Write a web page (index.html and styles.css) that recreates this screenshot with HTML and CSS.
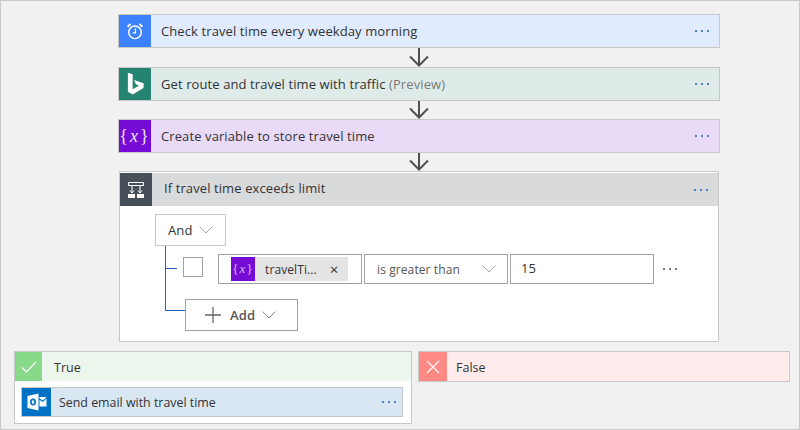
FILE: index.html
```html
<!DOCTYPE html>
<html>
<head>
    <title>Travel time logic app</title>
    <link rel="stylesheet" href="styles.css">
</head>
<body>
    <div class="flow">
        <div class="step step-timer">
            <div class="step-icon icon-timer">
                <svg width="18" height="18" viewBox="0 0 20 20" fill="none" stroke="#fff" stroke-width="1.6">
                    <circle cx="10" cy="11.500" r="7"/>
                    <path d="M10.500 7V12.200H7.500" stroke-width="1.400"/>
                    <path d="M1.800 5.200 5 2.200M18.200 5.200 15 2.200" stroke-width="2.200"/>
                </svg>
            </div>
            <div class="step-title">Check travel time every weekday morning</div>
            <div class="dots"><i></i><i></i><i></i></div>
        </div>
        <div class="arrow">
            <svg width="20" height="19" viewBox="0 0 20 19" fill="none" stroke="#505050" stroke-width="2"><path d="M10 0V17.500M1 8.500 10 17.500 19 8.500"/></svg>
        </div>
        <div class="step step-bing">
            <div class="step-icon icon-bing">
                <svg width="19" height="25" viewBox="0 0 20 26"><path fill="#fff" d="M2 0.500 7 2.300V18L13.500 14.300 10.400 12.800 8.500 8.200 18.500 11.800V16.700L7 23.500 2 20.700Z"/></svg>
            </div>
            <div class="step-title">Get route and travel time with traffic <span class="muted">(Preview)</span></div>
            <div class="dots"><i></i><i></i><i></i></div>
        </div>
        <div class="arrow arrow-short">
            <svg width="20" height="18" viewBox="0 0 20 18" fill="none" stroke="#505050" stroke-width="2"><path d="M10 0V16.500M1 7.500 10 16.500 19 7.500"/></svg>
        </div>
        <div class="step step-var">
            <div class="step-icon icon-var"><span class="var-text">{<i>x</i>}</span></div>
            <div class="step-title">Create variable to store travel time</div>
            <div class="dots"><i></i><i></i><i></i></div>
        </div>
        <div class="arrow arrow-short">
            <svg width="20" height="18" viewBox="0 0 20 18" fill="none" stroke="#505050" stroke-width="2"><path d="M10 0V16.500M1 7.500 10 16.500 19 7.500"/></svg>
        </div>
        <div class="condition">
            <div class="condition-head">
                <div class="condition-icon">
                    <svg width="18" height="18" viewBox="0 0 18 18" fill="none" stroke="#fff">
                        <path d="M1.500 1.500H16.500V4.500H1.500Z"/>
                        <path d="M5 4.500V12M13 4.500V12" stroke="#c8cbd0" stroke-width="1.500"/>
                        <path d="M3 9.500 5 12 7 9.500M11 9.500 13 12 15 9.500"/>
                        <path fill="#fff" stroke="none" d="M1 13H8V17H1ZM10 13H17V17H10Z"/>
                    </svg>
                </div>
                <div class="step-title condition-title">If travel time exceeds limit</div>
                <div class="dots"><i></i><i></i><i></i></div>
            </div>
            <div class="condition-body">
                <div class="and-btn">And
                    <svg class="chev" width="14" height="8" viewBox="0 0 14 8" fill="none" stroke="#a6a6a6"><path d="M0.500 0.500 7 7 13.500 0.500"/></svg>
                </div>
                <div class="tree">
                    <div class="tree-row cond-row">
                        <div class="stub"><div class="stub-line"></div></div>
                        <div class="checkbox"></div>
                        <div class="field token-field">
                            <div class="token">
                                <div class="token-icon"><span class="var-text var-small">{<i>x</i>}</span></div>
                                <span class="token-name">travelTi...</span>
                                <span class="token-close">×</span>
                            </div>
                        </div>
                        <div class="field select-field">is greater than
                            <svg class="chev" width="14" height="8" viewBox="0 0 14 8" fill="none" stroke="#a6a6a6"><path d="M0.500 0.500 7 7 13.500 0.500"/></svg>
                        </div>
                        <div class="field value-field">15</div>
                        <div class="row-dots"><i></i><i></i><i></i></div>
                    </div>
                    <div class="tree-row">
                        <div class="stub-end"></div>
                        <div class="add-btn">
                            <svg width="18" height="18" viewBox="0 0 18 18" stroke="#666" stroke-width="1.300"><path d="M1 9H17M9 1V17"/></svg>
                            <span class="add-label">Add</span>
                            <svg class="chev" width="14" height="8" viewBox="0 0 14 8" fill="none" stroke="#888"><path d="M0.500 0.500 7 7 13.500 0.500"/></svg>
                        </div>
                    </div>
                </div>
            </div>
        </div>
    </div>
    <div class="branches">
        <div class="branch branch-true">
            <div class="branch-head head-true">
                <div class="branch-icon icon-true">
                    <svg width="16" height="12" viewBox="0 0 16 12" fill="none" stroke="#fff" stroke-width="1.100"><path d="M1 6.500 5.500 11 15 1"/></svg>
                </div>
                <div class="branch-title">True</div>
            </div>
            <div class="branch-body">
                <div class="step step-mail">
                    <div class="mail-icon">
                        <svg width="20" height="20" viewBox="0 0 20 20">
                            <path fill="#fff" d="M0.500 4 11.500 1.500V18.500L0.500 16Z"/>
                            <path fill="#0072c6" d="M6 6.500C8 6.500 9 8 9 10S8 13.500 6 13.500 3 12 3 10 4 6.500 6 6.500ZM6 8.200C5.200 8.200 4.800 9 4.800 10S5.200 11.800 6 11.800 7.200 11 7.200 10 6.800 8.200 6 8.200Z"/>
                            <path fill="#fff" d="M12.500 5H19.500L16 8.500 12.500 6.500ZM12.500 8 16 10 19.500 6.500V14.500H12.500Z"/>
                        </svg>
                    </div>
                    <div class="step-title mail-title">Send email with travel time</div>
                    <div class="dots"><i></i><i></i><i></i></div>
                </div>
            </div>
        </div>
        <div class="branch-false">
            <div class="branch-icon icon-false">
                <svg width="14" height="14" viewBox="0 0 14 14" stroke="#fff" stroke-width="1.100"><path d="M1 1 13 13M13 1 1 13"/></svg>
            </div>
            <div class="branch-title false-title">False</div>
        </div>
    </div>
</body>
</html>
```

FILE: styles.css
```css
* {
    box-sizing: border-box;
}
body {
    margin: 0;
    height: 430px;
    padding-top: 13px;
    background-color: #f1f1f1;
    border: 1px solid #c8c8c8;
    font-family: "Open Sans", "Liberation Sans", sans-serif;
    font-size: 13px;
    letter-spacing: 0.1px;
    color: #333;
    overflow: hidden;
}
svg {
    display: block;
}

/* main column */
.flow {
    width: 602px;
    margin-left: 117px;
}
.step {
    display: flex;
    align-items: center;
    height: 34px;
    border: 1px solid #c8c8c8;
}
.step-timer { background-color: #e0ebff; }
.step-bing { background-color: #deebe8; }
.step-var { background-color: #e9daf7; }
.step-icon {
    display: flex;
    align-items: center;
    justify-content: center;
    width: 32px;
    height: 32px;
}
.icon-timer { background-color: #3c82ff; }
.icon-bing { background-color: #248371; }
.icon-var { background-color: #770bd6; }
.var-text {
    font-family: "Liberation Serif", serif;
    font-size: 18px;
    letter-spacing: 2px;
    color: #f0e4fb;
}
.var-small {
    font-size: 13px;
    letter-spacing: 1px;
    color: #d8b8f5;
}
.step-title {
    flex: 1;
    padding-left: 10px;
}
.muted {
    color: #7a7a7a;
}
.dots {
    display: flex;
    gap: 4px;
    margin-right: 10px;
}
.dots i {
    width: 2px;
    height: 2px;
    background-color: #4a82cc;
}
.arrow {
    display: flex;
    justify-content: center;
    height: 19px;
}
.arrow-short {
    height: 18px;
}

/* condition card */
.condition {
    width: 600px;
    height: 171px;
    margin-left: 1px;
    padding-top: 1px;
    background-color: #fff;
    border: 1px solid #c8c8c8;
}
.condition-head {
    display: flex;
    align-items: center;
    height: 33px;
    background-color: #d9dadb;
}
.condition-icon {
    display: flex;
    align-items: center;
    justify-content: center;
    width: 32px;
    height: 33px;
    background-color: #474f59;
}
.condition-title {
    padding-left: 12px;
    padding-bottom: 3px;
}
.condition-body {
    padding: 8px 0 0 35px;
}
.and-btn {
    display: flex;
    align-items: center;
    justify-content: space-between;
    width: 71px;
    height: 32px;
    padding: 0 12px;
    border: 1px solid #c8c8c8;
}
.tree {
    margin-left: 10px;
}
.tree-row {
    display: flex;
    align-items: flex-start;
}
.cond-row {
    height: 53px;
}
.stub {
    align-self: stretch;
    width: 12px;
    border-left: 1px solid #2a62ab;
}
.stub-line {
    height: 23px;
    border-bottom: 1px solid #2a62ab;
}
.checkbox {
    width: 20px;
    height: 20px;
    margin: 11px 15px 0 6px;
    border: 1px solid #a0a0a0;
}
.field {
    display: flex;
    align-items: center;
    width: 144px;
    height: 30px;
    margin-top: 8px;
    margin-right: 2px;
    border: 1px solid #a0a0a0;
}
.token-field {
    padding-left: 12px;
}
.token {
    display: flex;
    align-items: center;
    width: 117px;
    height: 24px;
    font-size: 12px;
    background-color: #e4e4e4;
}
.token-icon {
    display: flex;
    align-items: center;
    justify-content: center;
    width: 24px;
    height: 24px;
    background-color: #770bd6;
}
.token-name {
    margin-left: 10px;
}
.token-close {
    margin-left: 13px;
    font-size: 15px;
}
.select-field {
    justify-content: space-between;
    padding: 0 11px 0 12px;
    font-size: 12px;
    color: #555;
}
.value-field {
    margin-right: 0;
    padding: 0 0 2px 10px;
}
.row-dots {
    display: flex;
    gap: 4px;
    margin: 22px 0 0 9px;
}
.row-dots i {
    width: 2px;
    height: 2px;
    background-color: #777;
}
.stub-end {
    width: 20px;
    height: 12px;
    border-left: 1px solid #2a62ab;
    border-bottom: 1px solid #2a62ab;
}
.add-btn {
    display: flex;
    align-items: center;
    width: 113px;
    height: 32px;
    padding-left: 18px;
    border: 1px solid #a0a0a0;
}
.add-label {
    margin: 0 7px 0 8px;
    font-weight: 600;
    color: #555;
}

/* branches */
.branches {
    display: flex;
    align-items: flex-start;
    gap: 6px;
    margin: 9px 0 0 13px;
}
.branch {
    width: 398px;
    height: 73px;
    background-color: #fff;
    border: 1px solid #c8c8c8;
}
.branch-head {
    display: flex;
    align-items: center;
    height: 29px;
}
.head-true {
    background-color: #ecf6ec;
}
.branch-icon {
    display: flex;
    align-items: center;
    justify-content: center;
    width: 28px;
    height: 29px;
}
.icon-true {
    width: 27px;
    background-color: #89d98a;
}
.icon-false { background-color: #ff8a84; }
.branch-title {
    padding: 1px 0 0 12px;
    font-size: 12.5px;
    letter-spacing: 0;
}
.false-title {
    padding-left: 9px;
}
.branch-body {
    padding: 6px 8px 0 6px;
}
.step-mail {
    height: 30px;
    background-color: #d9e7f3;
}
.mail-icon {
    display: flex;
    align-items: center;
    justify-content: center;
    width: 29px;
    height: 28px;
    background-color: #0072c6;
}
.mail-title {
    padding-left: 8px;
    font-size: 12.400px;
    letter-spacing: 0;
}
.step-mail .dots {
    margin-right: 6px;
}
.branch-false {
    display: flex;
    align-items: center;
    width: 372px;
    height: 31px;
    background-color: #ffebeb;
    border: 1px solid #c8c8c8;
}
```
